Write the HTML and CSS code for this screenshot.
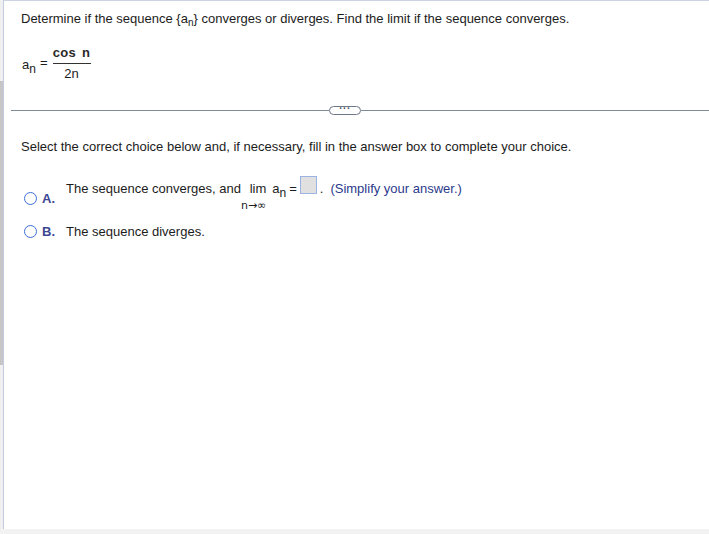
FILE: index.html
```html
<!DOCTYPE html>
<html>
<head>
<meta charset="utf-8">
<link rel="stylesheet" href="styles.css">
</head>
<body>
<div class="frame">
  <div class="gutter"><div class="thumb"></div></div>
  <div class="panel">
    <div class="question">
      <p class="prompt">Determine if the sequence {a<sub>n</sub>} converges or diverges. Find the limit if the sequence converges.</p>
      <div class="formula">
        <span class="var">a<sub>n</sub></span>
        <span class="eq">=</span>
        <span class="frac"><span class="num">cos n</span><span class="den">2n</span></span>
      </div>
    </div>
    <div class="divider">
      <span class="line line-left"></span>
      <span class="more">&middot;&middot;&middot;</span>
      <span class="line"></span>
    </div>
    <p class="instr">Select the correct choice below and, if necessary, fill in the answer box to complete your choice.</p>
    <div class="choices">
      <div class="choice choice-a">
        <span class="radio"></span>
        <span class="label">A.</span>
        <div class="ctext">
          <span>The sequence converges, and</span>
          <span class="lim"><span class="limtop">lim</span><span class="limsub">n&rarr;&infin;</span></span>
          <span class="var">a<sub>n</sub></span>
          <span class="eq2">=</span>
          <span class="box"></span>
          <span class="dot">.</span>
          <span class="hint">(Simplify your answer.)</span>
        </div>
      </div>
      <div class="choice choice-b">
        <span class="radio"></span>
        <span class="label">B.</span>
        <span class="ctext">The sequence diverges.</span>
      </div>
    </div>
  </div>
</div>
</body>
</html>
```

FILE: styles.css
```css
* { box-sizing: border-box; }
html, body { margin: 0; padding: 0; }
body {
  width: 709px;
  height: 534px;
  background: #f2f2f2;
  font-family: "Liberation Sans", Arial, sans-serif;
  font-size: 13px;
  color: #1c1c1c;
  overflow: hidden;
}
.frame {
  display: flex;
  height: 529px;
}
.gutter {
  width: 3px;
  background: #f0f0f0;
  padding-top: 81px;
}
.thumb {
  height: 284px;
  background: #c6c6c6;
}
.panel {
  flex: 1;
  background: #fff;
  border-left: 1px solid #c3cbe0;
  border-top: 1px solid #ccd3e2;
  padding-left: 7px;
}
.prompt {
  margin: 0;
  padding: 10px 0 0 10px;
  line-height: 15px;
}
sub {
  font-size: 10px;
  vertical-align: -3px;
  line-height: 0;
}
.formula {
  display: flex;
  align-items: center;
  padding: 19px 0 0 11px;
  height: 55px;
}
.formula .var { font-size: 13px; margin-top: 3px; }
.formula .var sub { font-size: 12px; vertical-align: -4px; }
.formula .eq { margin: 0 5px 0 4px; margin-top: -2px; }
.frac {
  display: flex;
  flex-direction: column;
  align-items: center;
  width: 38px;
}
.num {
  font-weight: bold;
  color: #2a2a2a;
  border-bottom: 1px solid #333;
  width: 100%;
  text-align: center;
  padding-bottom: 3px;
  letter-spacing: 0.3px;
  word-spacing: 2px;
  line-height: 14px;
}
.den { line-height: 14px; padding-top: 3px; }
.divider {
  display: flex;
  align-items: center;
  margin-top: 24px;
  height: 10px;
}
.line {
  flex: 1;
  height: 1px;
  background: #7f8a9b;
}
.line-left { flex: none; width: 318px; }
.more {
  width: 32px;
  height: 9px;
  border: 1px solid #6d7787;
  border-radius: 5px;
  font-size: 10px;
  line-height: 3px;
  text-align: center;
  color: #4a5262;
  font-weight: bold;
  letter-spacing: 0.5px;
}
.instr {
  margin: 0;
  padding: 24px 0 0 10px;
  line-height: 15px;
}
.choices { padding: 26px 0 0 13px; }
.choice {
  display: flex;
  align-items: center;
}
.radio {
  width: 13px;
  height: 13px;
  border: 1.5px solid #3d6fd6;
  border-radius: 50%;
  flex: none;
}
.label {
  color: #3b4792;
  font-weight: bold;
  margin-left: 5px;
  width: 24px;
  font-size: 13px;
}
.choice-a { align-items: flex-start; height: 44px; }
.choice-a .radio { margin-top: 12px; }
.choice-a .label { margin-top: 11px; }
.ctext {
  display: flex;
  align-items: flex-start;
  line-height: 15px;
}
.choice-a .ctext { margin-top: 1px; }
.lim {
  display: flex;
  flex-direction: column;
  align-items: flex-end;
  margin-left: 0;
  margin-right: 6px;
}
.limsub {
  font-size: 11px;
  line-height: 12px;
  margin-top: 4px;
  font-family: "DejaVu Sans", "Liberation Sans", sans-serif;
}
.choice-a .var sub { font-size: 12px; vertical-align: -4px; }
.eq2 { margin-left: 3px; margin-right: 3px; }
.box {
  width: 17px;
  height: 18px;
  background: #e0e0e0;
  border: 1px solid #9db3e6;
  margin-top: -5px;
}
.dot { margin-left: 3px; margin-right: 7px; }
.hint { color: #2c3a8c; }
```
